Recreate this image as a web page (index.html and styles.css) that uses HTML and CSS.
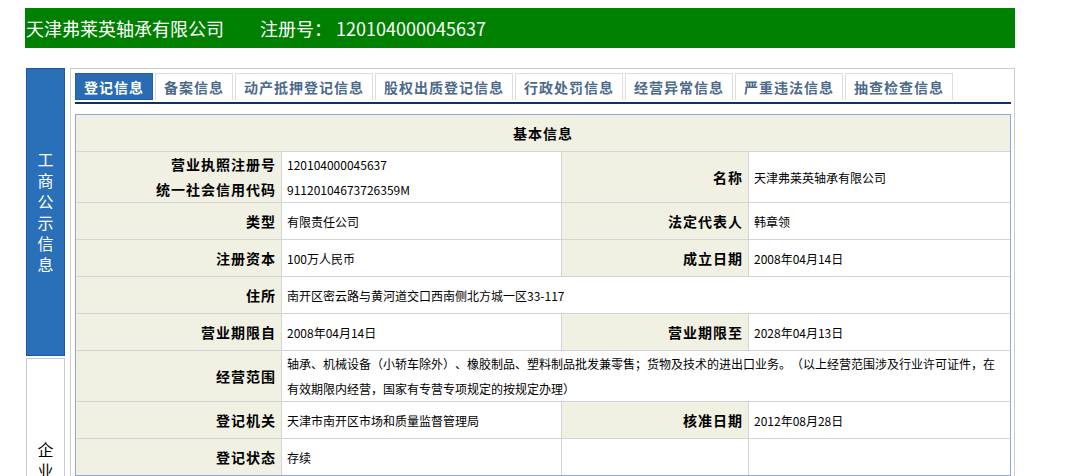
FILE: index.html
```html
<!DOCTYPE html>
<html lang="zh-CN">
<head>
  <meta charset="UTF-8">
  <title>天津弗莱英轴承有限公司</title>
  <link rel="stylesheet" href="styles.css">
</head>
<body>
  <div class="page">
    <div class="title">天津弗莱英轴承有限公司<span class="reg">注册号：&nbsp;120104000045637</span></div>
    <div class="layout">
      <div class="side">
        <div class="side-item active"><span>工商公示信息</span></div>
        <div class="side-item"><span>企业公示信息</span></div>
      </div>
      <div class="main">
        <ul class="tabs">
          <li class="active">登记信息</li>
          <li>备案信息</li>
          <li>动产抵押登记信息</li>
          <li>股权出质登记信息</li>
          <li>行政处罚信息</li>
          <li>经营异常信息</li>
          <li>严重违法信息</li>
          <li>抽查检查信息</li>
        </ul>
        <table class="info">
          <colgroup>
            <col class="c1"><col class="c2"><col class="c3"><col class="c4">
          </colgroup>
          <tr><th class="head" colspan="4">基本信息</th></tr>
          <tr class="double">
            <th>营业执照注册号<br>统一社会信用代码</th>
            <td>120104000045637<br>91120104673726359M</td>
            <th>名称</th>
            <td>天津弗莱英轴承有限公司</td>
          </tr>
          <tr>
            <th>类型</th>
            <td>有限责任公司</td>
            <th>法定代表人</th>
            <td>韩章领</td>
          </tr>
          <tr>
            <th>注册资本</th>
            <td>100万人民币</td>
            <th>成立日期</th>
            <td>2008年04月14日</td>
          </tr>
          <tr>
            <th>住所</th>
            <td colspan="3">南开区密云路与黄河道交口西南侧北方城一区33-117</td>
          </tr>
          <tr>
            <th>营业期限自</th>
            <td>2008年04月14日</td>
            <th>营业期限至</th>
            <td>2028年04月13日</td>
          </tr>
          <tr class="double">
            <th>经营范围</th>
            <td colspan="3">轴承、机械设备（小轿车除外）、橡胶制品、塑料制品批发兼零售；货物及技术的进出口业务。（以上经营范围涉及行业许可证件，在有效期限内经营，国家有专营专项规定的按规定办理）</td>
          </tr>
          <tr>
            <th>登记机关</th>
            <td>天津市南开区市场和质量监督管理局</td>
            <th>核准日期</th>
            <td>2012年08月28日</td>
          </tr>
          <tr>
            <th>登记状态</th>
            <td>存续</td>
            <td></td>
            <td></td>
          </tr>
        </table>
      </div>
    </div>
  </div>
</body>
</html>
```

FILE: styles.css
```css
body {
  margin: 0;
  padding: 8px 0 0 25px;
  font-family: "Noto Sans CJK SC", sans-serif;
  color: #000;
  background: #fff;
  text-spacing-trim: space-all;
}
.page {
  width: 990px;
}
.title {
  height: 40px;
  line-height: 40px;
  background: #008000;
  color: #fff;
  font-size: 18px;
  padding-left: 1px;
}
.reg {
  margin-left: 36px;
}
.layout {
  display: flex;
  gap: 5px;
  margin-top: 20px;
}
.side {
  width: 39px;
  margin-left: 1px;
  display: flex;
  flex-direction: column;
  gap: 2px;
}
.side-item {
  height: 288px;
  box-sizing: border-box;
  border: 1px solid #ccc;
  background: #fff;
  color: #000;
  display: flex;
  align-items: center;
  justify-content: center;
}
.side-item.active {
  background: #2a70b8;
  border-color: #1d55a0;
  color: #fff;
}
.side-item span {
  width: 16px;
  font-size: 16px;
  line-height: 21px;
}
.main {
  flex: 1;
  border: 1px solid #ccc;
  padding: 4px 3px 0 4px;
  height: 420px;
}
.tabs {
  list-style: none;
  margin: 0;
  padding: 0 0 2px 0;
  display: flex;
  gap: 2px;
  border-bottom: 2px solid #0f3263;
}
.tabs li {
  height: 27px;
  box-sizing: border-box;
  border: 1px solid #ddd;
  border-bottom: none;
  padding: 0 8px;
  line-height: 26px;
  font-size: 14px;
  font-weight: bold;
  letter-spacing: 1px;
  color: #4b6a8c;
}
.tabs li.active {
  background: #2a6cb3;
  border: 1px solid #245f9f;
  color: #fff;
}
.info {
  width: 936px;
  margin-top: 10px;
  border: 1px solid #8ca7e3;
  border-spacing: 0;
  table-layout: fixed;
}
.c1 { width: 205px; }
.c2 { width: 280px; }
.c3 { width: 187px; }
.c4 { width: 262px; }
.info th,
.info td {
  height: 36px;
  padding: 0;
  border-top: 1px solid #d4d4d4;
  border-left: 1px solid #d4d4d4;
  line-height: 25px;
  vertical-align: middle;
}
.info tr:first-child > * {
  border-top: none;
}
.info tr > :first-child {
  border-left: none;
}
.info th {
  background: #f1f1e3;
  text-align: right;
  padding-right: 5px;
  font-size: 14px;
  font-weight: bold;
  letter-spacing: 1px;
}
.info th.head {
  text-align: center;
  padding-right: 0;
}
.info td {
  font-size: 12px;
  padding: 0 8px 0 5px;
}
.info tr.double > * {
  height: 50px;
}
```
